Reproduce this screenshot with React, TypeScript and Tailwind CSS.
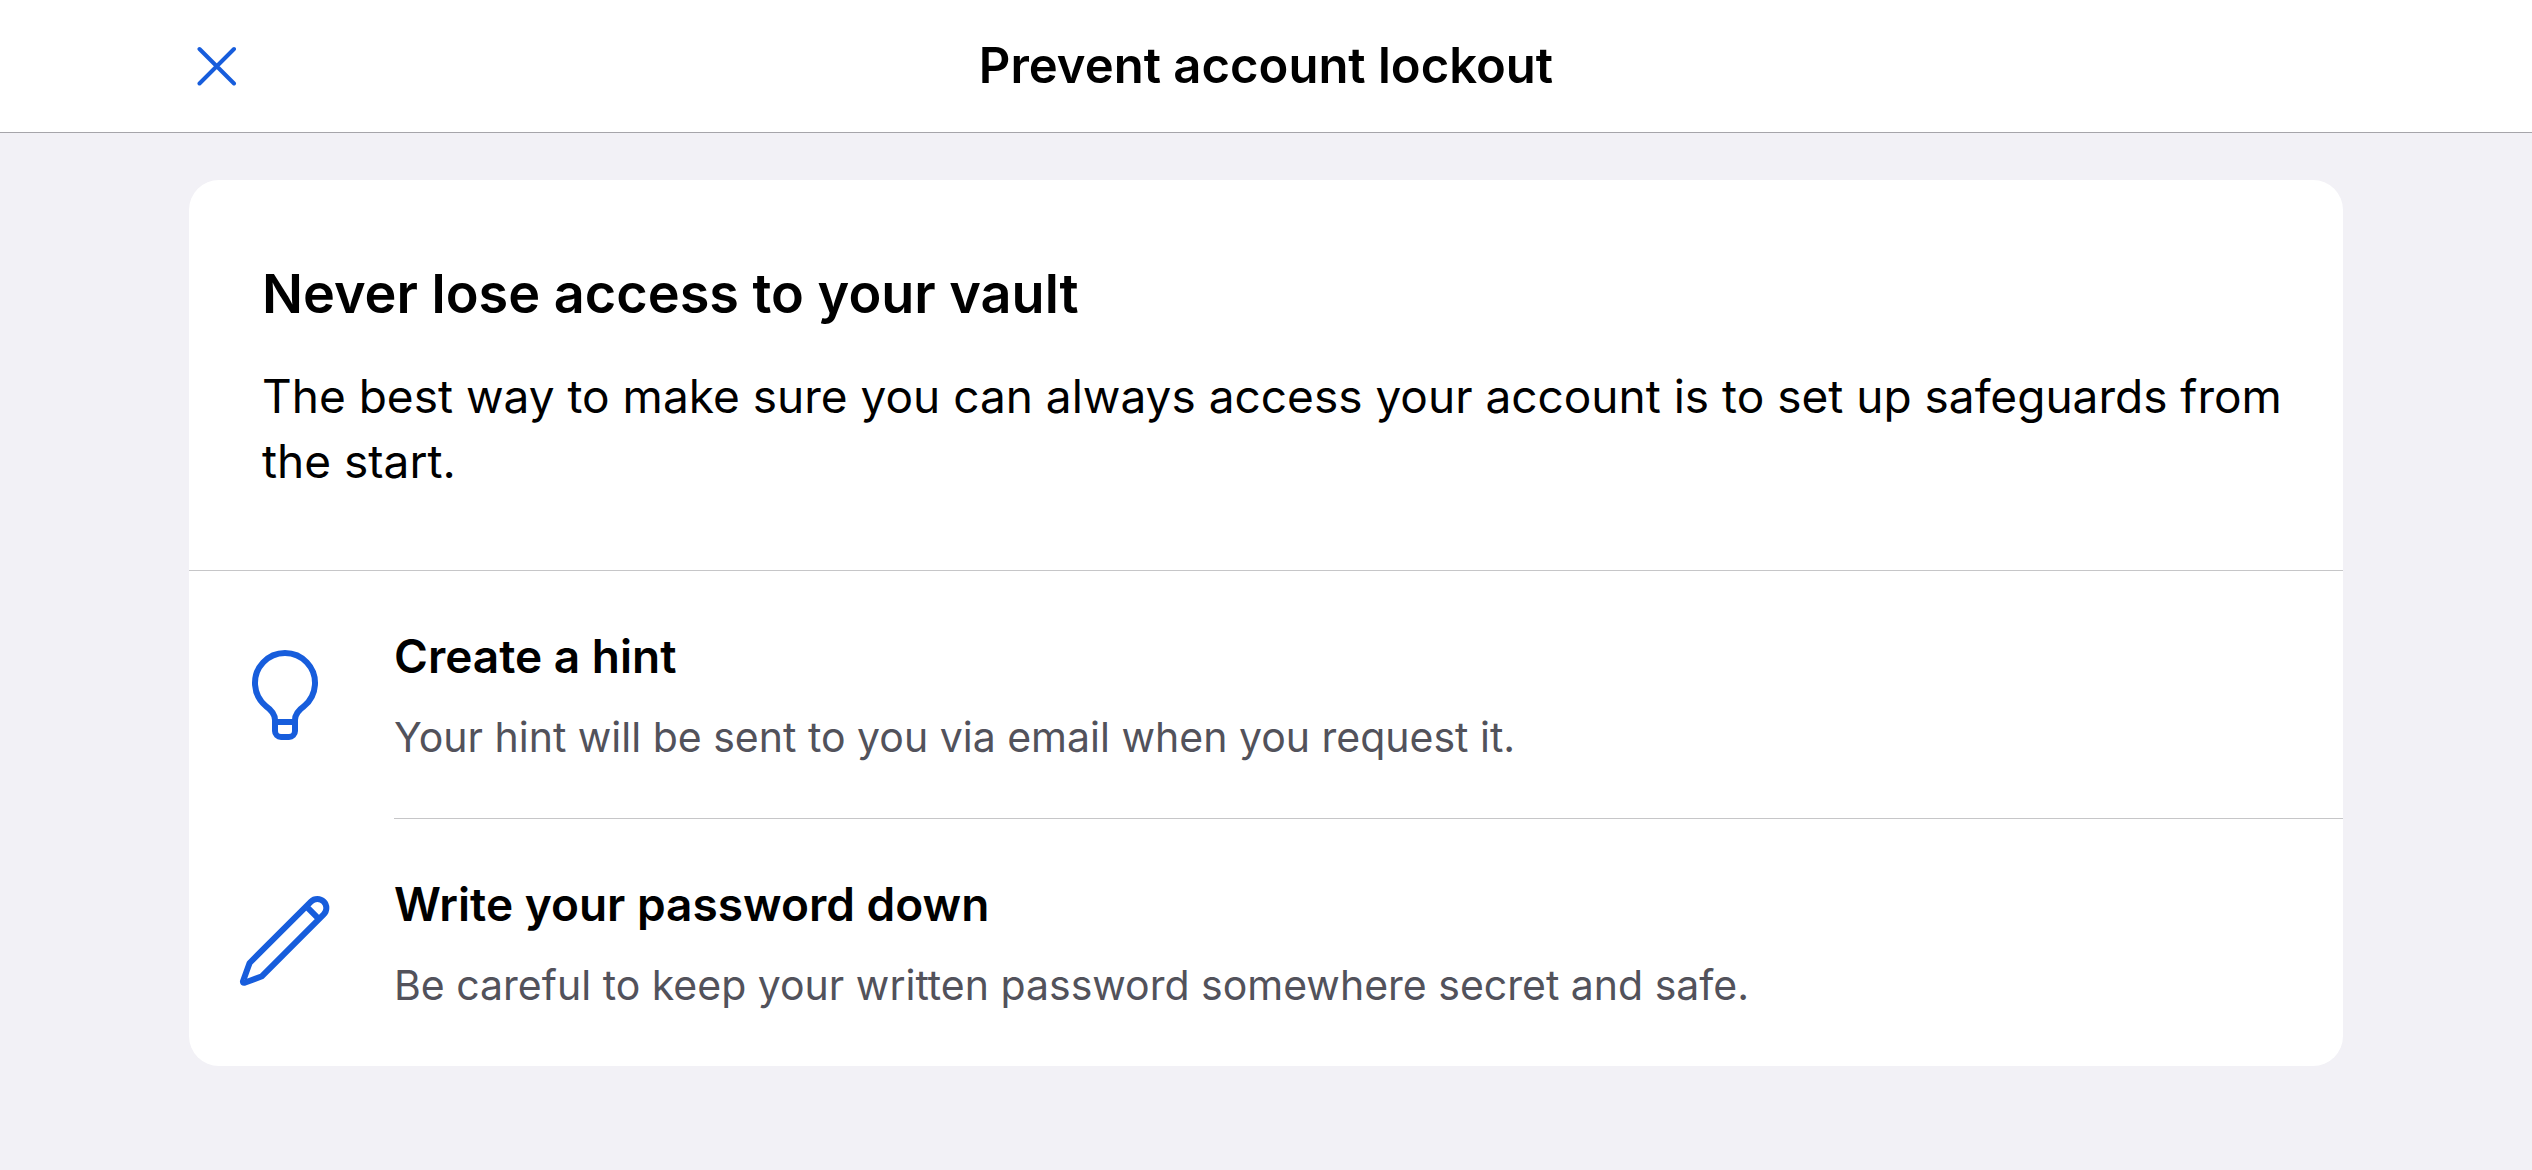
import type { ReactNode } from 'react';

function CloseIcon() {
  return (
    <svg viewBox="0 0 40 40" className="size-10" fill="none" stroke="currentColor" strokeWidth="4" strokeLinecap="round" aria-hidden="true">
      <path d="M2.5 3L37 37.5M37 3L2.5 37.5" />
    </svg>
  );
}

function BulbIcon() {
  return (
    <svg viewBox="0 0 96 96" className="size-24" fill="none" stroke="currentColor" strokeWidth="6" strokeLinejoin="round" aria-hidden="true">
      <path d="M38 84V73C38 68 34.5 63 29 59.2A30 30 0 1 1 67 59.2C61.5 63 58 68 58 73V84a6 6 0 0 1-6 6h-8a6 6 0 0 1-6-6zM38 75h20" />
    </svg>
  );
}

function PencilIcon() {
  return (
    <svg viewBox="0 0 96 96" className="size-24" fill="none" stroke="currentColor" strokeWidth="6" strokeLinejoin="round" aria-hidden="true">
      <path d="M12.6 68L74 6.6A9 9 0 0 1 86.7 19.4L25 81.2L7.6 87.8Q5.6 88.2 6 86.2ZM69.3 11.3L82 24.1" />
    </svg>
  );
}

type Tip = { title: string; text: string; icon: ReactNode };

const tips: Tip[] = [
  { title: 'Create a hint', text: 'Your hint will be sent to you via email when you request it.', icon: <BulbIcon /> },
  { title: 'Write your password down', text: 'Be careful to keep your written password somewhere secret and safe.', icon: <PencilIcon /> },
];

export default function App() {
  return (
    <div className="min-h-screen bg-[#f2f1f6] font-['Inter',sans-serif] text-black">
      <header className="grid grid-cols-[1fr_auto_1fr] items-center border-b border-[#a6a5aa] bg-white px-[189px] py-[34px]">
        <button type="button" aria-label="Close" className="justify-self-start px-2 text-[#175ddc]">
          <CloseIcon />
        </button>
        <h1 className="text-[49px] leading-[64px] font-semibold">Prevent account lockout</h1>
      </header>

      <main className="px-[189px] py-[47px]">
        <section className="overflow-hidden rounded-[30px] bg-white">
          <div className="border-b border-[#c6c6c8] pt-20 pr-12 pb-[76px] pl-[73px]">
            <h2 className="text-[54px] leading-[68px] font-semibold">Never lose access to your vault</h2>
            <p className="mt-9 text-[46px] leading-[65px]">
              The best way to make sure you can always access your account is to set up safeguards from the start.
            </p>
          </div>
          <ul>
            {tips.map((tip) => (
              <li key={tip.title} className="group flex items-stretch">
                <div className="flex w-[205px] shrink-0 items-center pl-12 text-[#175ddc]">{tip.icon}</div>
                <div className="grow border-b border-[#c6c6c8] pt-[55px] pb-[54px] group-last:border-b-0">
                  <h3 className="text-[46px] leading-[60px] font-semibold">{tip.title}</h3>
                  <p className="mt-6 text-[41px] leading-[54px] text-[#52525b]">{tip.text}</p>
                </div>
              </li>
            ))}
          </ul>
        </section>
      </main>
    </div>
  );
}
